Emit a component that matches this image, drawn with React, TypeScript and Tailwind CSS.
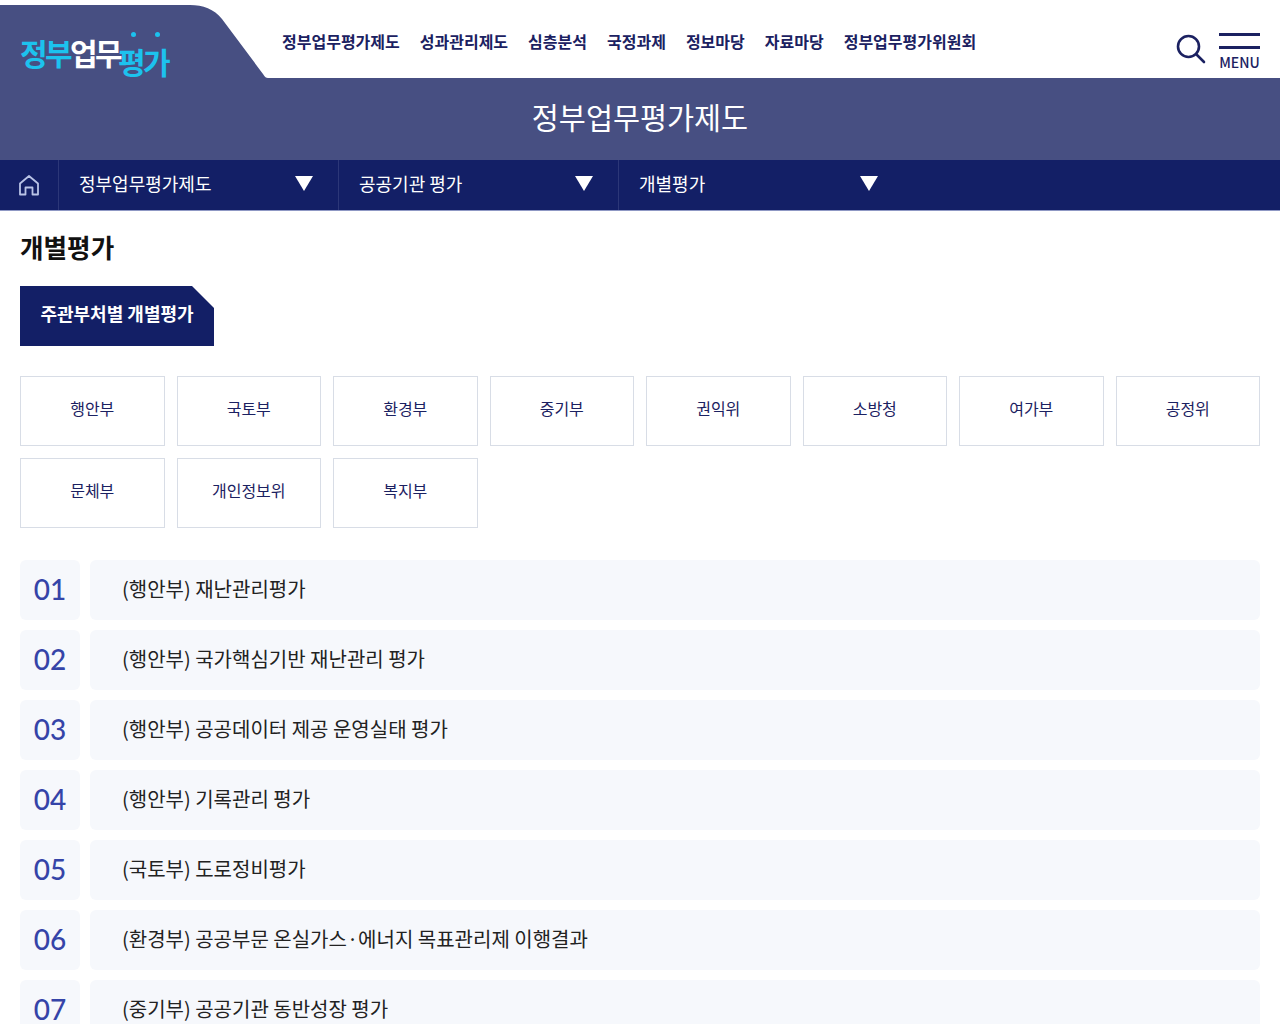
const MENU = ["정부업무평가제도", "성과관리제도", "심층분석", "국정과제", "정보마당", "자료마당", "정부업무평가위원회"];
const CRUMBS = [
  { label: "정부업무평가제도", arrow: "ml-[84px]", border: "border-r" },
  { label: "공공기관 평가", arrow: "ml-[113px]", border: "border-r" },
  { label: "개별평가", arrow: "ml-[155px]", border: "" },
];
const DEPTS = ["행안부", "국토부", "환경부", "중기부", "권익위", "소방청", "여가부", "공정위", "문체부", "개인정보위", "복지부"];
const ITEMS = [
  "(행안부) 재난관리평가",
  "(행안부) 국가핵심기반 재난관리 평가",
  "(행안부) 공공데이터 제공 운영실태 평가",
  "(행안부) 기록관리 평가",
  "(국토부) 도로정비평가",
  "(환경부) 공공부문 온실가스·에너지 목표관리제 이행결과",
  "(중기부) 공공기관 동반성장 평가",
];

function LogoTab() {
  return (
    <div className="relative h-[78px] w-[268px] shrink-0">
      <svg className="absolute left-0 top-0" width="268" height="78" viewBox="0 0 268 78">
        <path d="M0 5H190C203 5 214 9 222 19L263 74C265 77 266 78 268 78H0Z" fill="#474f82" />
      </svg>
      <div className="absolute left-[20px] top-[32px] flex items-start text-[30px] font-bold leading-[40px] tracking-[-2.6px]">
        <span className="text-[#1cc2ee]">정부</span>
        <span className="text-white">업무</span>
        <span className="-ml-[2px] mt-[9px] text-[#1cc2ee]">평가</span>
      </div>
      <span className="absolute left-[131px] top-[32px] h-[5px] w-[5px] rounded-full bg-[#1cc2ee]" />
      <span className="absolute left-[155px] top-[32px] h-[5px] w-[5px] rounded-full bg-[#1cc2ee]" />
    </div>
  );
}

function Triangle() {
  return (
    <svg width="18" height="15" viewBox="0 0 18 15" className="shrink-0">
      <path d="M0 0H18L9 15Z" fill="#fff" />
    </svg>
  );
}

export default function App() {
  return (
    <div className="h-[1024px] overflow-hidden bg-white font-['Noto_Sans_CJK_KR','Noto_Sans',sans-serif]">
      <header className="flex h-[78px] items-start">
        <LogoTab />
        <nav className="ml-[14px] flex gap-[20px] pt-[29px] text-[16px] font-bold leading-[24px] text-[#1b2161]">
          {MENU.map((m) => (
            <a key={m}>{m}</a>
          ))}
        </nav>
        <div className="ml-auto flex items-start pr-[20px] pt-[33px]">
          <svg width="30" height="30" viewBox="0 0 30 30" fill="none" stroke="#1b2161" strokeWidth="2.6" strokeLinecap="round" className="mr-[13px] mt-[1px]">
            <circle cx="12.5" cy="12.5" r="10.5" />
            <path d="M20.5 20.5L28 28" />
          </svg>
          <div className="flex w-[41px] flex-col">
            <span className="h-[3px] bg-[#1b2161]" />
            <span className="mt-[10px] h-[3px] bg-[#1b2161]" />
            <span className="mt-[3px] text-center text-[14px] font-medium leading-[20px] text-[#1b2161]">MENU</span>
          </div>
        </div>
      </header>

      <div className="flex h-[82px] items-center justify-center bg-[#474f82] pb-[6px] text-[29.4px] leading-[40px] text-white">
        정부업무평가제도
      </div>

      <div className="flex h-[51px] items-center border-b border-[#8f98c4] bg-[#131f66] text-white">
        <div className="flex h-full w-[59px] items-center justify-center border-r border-[#2c3778]">
          <svg width="22" height="22" viewBox="0 0 22 22" fill="none" stroke="#b9c3e6" strokeWidth="1.8" strokeLinejoin="round">
            <path d="M2 9.5L11 2L20 9.5V20.5H14.5V13.5H7.5V20.5H2Z" />
          </svg>
        </div>
        {CRUMBS.map((c) => (
          <div key={c.label} className={`flex h-full w-[280px] items-center border-[#2c3778] pb-[4px] pl-[20px] text-[18px] ${c.border}`}>
            <span>{c.label}</span>
            <span className={c.arrow}>
              <Triangle />
            </span>
          </div>
        ))}
      </div>

      <main className="px-[20px]">
        <h2 className="mt-[17px] text-[25.6px] font-bold leading-[38px] text-[#111]">개별평가</h2>

        <div className="mt-[20px] flex h-[60px] w-[194px] items-center justify-center bg-[#131f66] pb-[6px] text-[18px] font-bold text-white [clip-path:polygon(0_0,172px_0,100%_22px,100%_100%,0_100%)]">
          주관부처별 개별평가
        </div>

        <div className="mt-[30px] grid grid-cols-8 gap-x-[12px] gap-y-[12px]">
          {DEPTS.map((d) => (
            <div key={d} className="flex h-[70px] items-center justify-center border border-[#d8dde6] pb-[6px] text-[16px] text-[#1b2161]">
              {d}
            </div>
          ))}
        </div>

        <ul className="mt-[32px] flex flex-col gap-[10px]">
          {ITEMS.map((item, i) => (
            <li key={item} className="flex h-[60px] gap-[10px]">
              <div className="flex w-[60px] shrink-0 items-center justify-center rounded-[6px] bg-[#f6f8fc] pb-[2px] font-['Lato',sans-serif] text-[28px] font-medium text-[#3544a8]">
                {String(i + 1).padStart(2, "0")}
              </div>
              <div className="flex flex-1 items-center rounded-[6px] bg-[#f6f8fc] pb-[2px] pl-[32px] text-[20px] text-[#222]">
                {item}
              </div>
            </li>
          ))}
        </ul>
      </main>
    </div>
  );
}
